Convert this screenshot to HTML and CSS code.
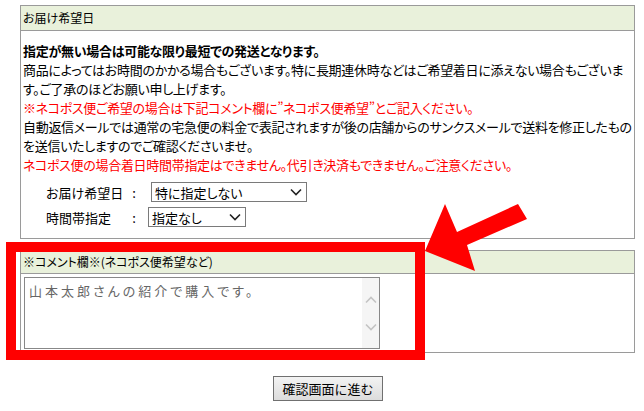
FILE: index.html
```html
<!DOCTYPE html>
<html lang="ja">
<head>
    <meta charset="UTF-8">
    <title>お届け希望日</title>
    <link rel="stylesheet" href="styles.css">
</head>
<body>
<div class="page">

    <!-- お届け希望日 -->
    <div class="panel">
        <div class="panel-head">お届け希望日</div>
        <div class="panel-body">
            <p class="notes"><b>指定が無い場合は可能な限り最短での発送となります。</b><br>商品によってはお時間のかかる場合もございます。特に長期連休時などはご希望着日に添えない場合もございま<br>す。ご了承のほどお願い申し上げます。<br><span class="red">※ネコポス便ご希望の場合は下記コメント欄に”ネコポス便希望”とご記入ください。</span><br>自動返信メールでは通常の宅急便の料金で表記されますが後の店舗からのサンクスメールで送料を修正したもの<br>を送信いたしますのでご確認くださいませ。<br><span class="red">ネコポス便の場合着日時間帯指定はできません。代引き決済もできません。ご注意ください。</span></p>

            <div class="field-row">
                <span class="field-label">お届け希望日</span>
                <span class="colon">:</span>
                <div class="select-box wide">
                    <span>特に指定しない</span>
                    <svg width="12" height="8" viewBox="0 0 12 8"><polyline points="1,1.5 6,6.5 11,1.5" fill="none" stroke="#222" stroke-width="1.6"/></svg>
                </div>
            </div>
            <div class="field-row">
                <span class="field-label">時間帯指定</span>
                <span class="colon">:</span>
                <div class="select-box narrow">
                    <span>指定なし</span>
                    <svg width="12" height="8" viewBox="0 0 12 8"><polyline points="1,1.5 6,6.5 11,1.5" fill="none" stroke="#222" stroke-width="1.6"/></svg>
                </div>
            </div>
        </div>
    </div>

    <!-- コメント欄 -->
    <div class="panel comment">
        <div class="panel-head">※コメント欄※(ネコポス便希望など)</div>
        <div class="panel-body">
            <div class="textarea">
                <div class="textarea-text">山本太郎さんの紹介で購入です。</div>
                <div class="scrollbar">
                    <svg width="12" height="8" viewBox="0 0 12 8"><polyline points="1,6.5 6,1.5 11,6.5" fill="none" stroke="#c4c4c4" stroke-width="1.6"/></svg>
                    <svg width="12" height="8" viewBox="0 0 12 8"><polyline points="1,1.5 6,6.5 11,1.5" fill="none" stroke="#c4c4c4" stroke-width="1.6"/></svg>
                </div>
            </div>
        </div>
    </div>

    <div class="actions">
        <button class="next-btn">確認画面に進む</button>
    </div>

    <!-- 赤枠と矢印 -->
    <svg class="callout" width="644" height="411" viewBox="0 0 644 411">
        <rect x="11" y="247" width="409" height="108" fill="none" stroke="#ff0000" stroke-width="10"/>
        <polygon points="425,251 445,204 457,232 518,204 527,219 467,245 475,271" fill="#ff0000"/>
    </svg>
</div>
</body>
</html>
```

FILE: styles.css
```css
body {
    margin: 0;
    font-family: "Noto Sans CJK JP", "Noto Sans", sans-serif;
    font-size: 13px;
    color: #000;
    background: #fff;
    font-feature-settings: "palt";
}

.page {
    position: relative;
    width: 644px;
    height: 411px;
    padding-top: 5px;
    box-sizing: border-box;
    overflow: hidden;
}

.panel {
    margin-left: 20px;
    width: 615px;
    box-sizing: border-box;
    border: 1px solid #9a9a9a;
}

.panel-head {
    height: 24px;
    line-height: 24px;
    padding-left: 2px;
    font-size: 12px;
    background: #e9f1db;
    border-bottom: 1px solid #9a9a9a;
}

.panel-body {
    padding: 10px 2px 11px;
}

.notes {
    margin: 0;
    line-height: 19px;
    letter-spacing: -0.3px;
    white-space: nowrap;
}

.red {
    color: #ff0000;
}

/* セレクト行 */
.field-row {
    display: flex;
    align-items: center;
    height: 20px;
    padding-left: 23px;
}

.field-row:first-of-type {
    margin-top: 8px;
}

.field-row + .field-row {
    margin-top: 5px;
}

.field-label {
    width: 78px;
}

.colon {
    width: 20px;
    text-align: center;
}

.select-box {
    display: flex;
    align-items: center;
    justify-content: space-between;
    height: 20px;
    box-sizing: border-box;
    border: 1px solid #7a7a7a;
    padding: 0 4px 0 3px;
    background: #fff;
}

.select-box.wide {
    width: 156px;
    margin-left: 7px;
}

.select-box.narrow {
    width: 98px;
    margin-left: 4px;
}

/* コメント欄 */
.comment {
    margin-top: 11px;
}

.comment .panel-head {
    height: 22px;
    line-height: 22px;
}

.comment .panel-body {
    padding: 3px 3px 3px;
}

.textarea {
    display: flex;
    width: 356px;
    height: 72px;
    box-sizing: border-box;
    border: 1px solid #888;
}

.textarea-text {
    flex: 1;
    padding: 5px 4px;
    color: #666;
    letter-spacing: 3px;
    line-height: 16px;
}

.scrollbar {
    width: 17px;
    background: #f5f5f5;
    display: flex;
    flex-direction: column;
    align-items: center;
    padding-top: 18px;
    gap: 19px;
}

.actions {
    margin-top: 23px;
}

.next-btn {
    margin-left: 273px;
    width: 110px;
    height: 25px;
    padding: 0;
    font-family: inherit;
    font-size: 13px;
    color: #000;
    border: 1px solid #707070;
    background: linear-gradient(#f3f3f3, #dcdcdc);
}

.callout {
    position: absolute;
    left: 0;
    top: 0;
    pointer-events: none;
}
```
